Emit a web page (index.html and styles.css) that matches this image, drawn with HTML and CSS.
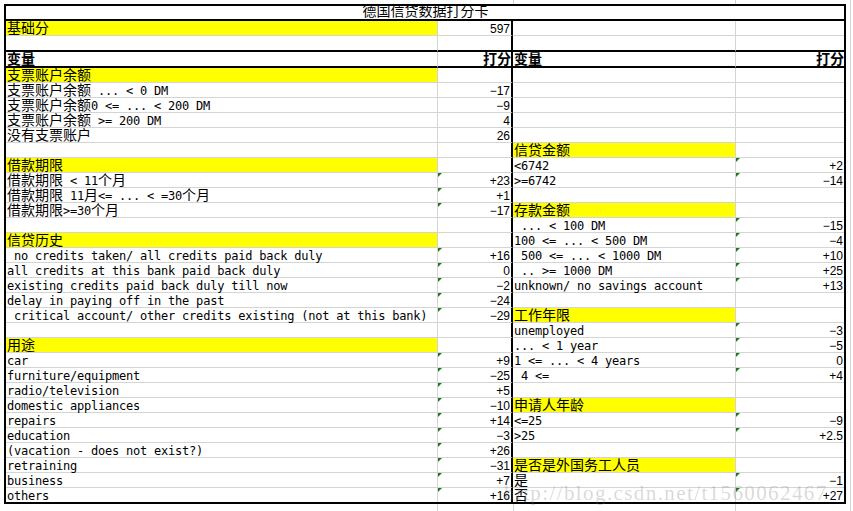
FILE: index.html
```html
<!DOCTYPE html>
<html lang="zh-CN">
<head>
<meta charset="utf-8">
<title>德国信贷数据打分卡</title>
<link rel="stylesheet" href="styles.css">
</head>
<body>
<div class="canvas">
  <div class="sheet">
    <div class="cell title"><span class="zh">德国信贷数据打分卡</span></div>

    <div class="cell col-a hl"><span class="zh">基础分</span></div><div class="cell col-b num">597</div><div class="cell col-c"></div><div class="cell col-d"></div>
    <div class="cell col-a thick"></div><div class="cell col-b thick"></div><div class="cell col-c thick"></div><div class="cell col-d thick"></div>
    <div class="cell col-a thick head"><span class="zh">变量</span></div><div class="cell col-b thick head right"><span class="zh">打分</span></div><div class="cell col-c thick head"><span class="zh">变量</span></div><div class="cell col-d thick head right"><span class="zh">打分</span></div>

    <div class="cell col-a hl"><span class="zh">支票账户余额</span></div><div class="cell col-b"></div><div class="cell col-c"></div><div class="cell col-d"></div>
    <div class="cell col-a"><span class="zh">支票账户余额</span> ... &lt; 0 DM</div><div class="cell col-b num">−17</div><div class="cell col-c"></div><div class="cell col-d"></div>
    <div class="cell col-a"><span class="zh">支票账户余额</span>0 &lt;= ... &lt; 200 DM</div><div class="cell col-b num">−9</div><div class="cell col-c"></div><div class="cell col-d"></div>
    <div class="cell col-a"><span class="zh">支票账户余额</span> &gt;= 200 DM</div><div class="cell col-b num">4</div><div class="cell col-c"></div><div class="cell col-d"></div>
    <div class="cell col-a"><span class="zh">没有支票账户</span></div><div class="cell col-b num">26</div><div class="cell col-c"></div><div class="cell col-d"></div>
    <div class="cell col-a"></div><div class="cell col-b"></div><div class="cell col-c hl"><span class="zh">信贷金额</span></div><div class="cell col-d"></div>
    <div class="cell col-a hl"><span class="zh">借款期限</span></div><div class="cell col-b"></div><div class="cell col-c">&lt;6742</div><div class="cell col-d num tri">+2</div>
    <div class="cell col-a"><span class="zh">借款期限</span> &lt; 11<span class="zh">个月</span></div><div class="cell col-b num tri">+23</div><div class="cell col-c">&gt;=6742</div><div class="cell col-d num tri">−14</div>
    <div class="cell col-a"><span class="zh">借款期限</span> 11<span class="zh">月</span>&lt;= ... &lt; =30<span class="zh">个月</span></div><div class="cell col-b num tri">+1</div><div class="cell col-c"></div><div class="cell col-d"></div>
    <div class="cell col-a"><span class="zh">借款期限</span>&gt;=30<span class="zh">个月</span></div><div class="cell col-b num tri">−17</div><div class="cell col-c hl"><span class="zh">存款金额</span></div><div class="cell col-d"></div>
    <div class="cell col-a"></div><div class="cell col-b"></div><div class="cell col-c"> ... &lt; 100 DM</div><div class="cell col-d num tri">−15</div>
    <div class="cell col-a hl"><span class="zh">信贷历史</span></div><div class="cell col-b"></div><div class="cell col-c">100 &lt;= ... &lt; 500 DM</div><div class="cell col-d num tri">−4</div>
    <div class="cell col-a"> no credits taken/ all credits paid back duly</div><div class="cell col-b num tri">+16</div><div class="cell col-c"> 500 &lt;= ... &lt; 1000 DM</div><div class="cell col-d num tri">+10</div>
    <div class="cell col-a">all credits at this bank paid back duly</div><div class="cell col-b num tri">0</div><div class="cell col-c"> .. &gt;= 1000 DM</div><div class="cell col-d num tri">+25</div>
    <div class="cell col-a">existing credits paid back duly till now</div><div class="cell col-b num tri">−2</div><div class="cell col-c">unknown/ no savings account</div><div class="cell col-d num tri">+13</div>
    <div class="cell col-a">delay in paying off in the past</div><div class="cell col-b num tri">−24</div><div class="cell col-c"></div><div class="cell col-d"></div>
    <div class="cell col-a"> critical account/ other credits existing (not at this bank)</div><div class="cell col-b num tri">−29</div><div class="cell col-c hl"><span class="zh">工作年限</span></div><div class="cell col-d"></div>
    <div class="cell col-a"></div><div class="cell col-b"></div><div class="cell col-c">unemployed</div><div class="cell col-d num tri">−3</div>
    <div class="cell col-a hl"><span class="zh">用途</span></div><div class="cell col-b"></div><div class="cell col-c">... &lt; 1 year</div><div class="cell col-d num tri">−5</div>
    <div class="cell col-a">car</div><div class="cell col-b num tri">+9</div><div class="cell col-c">1 &lt;= ... &lt; 4 years</div><div class="cell col-d num tri">0</div>
    <div class="cell col-a">furniture/equipment</div><div class="cell col-b num tri">−25</div><div class="cell col-c"> 4 &lt;=</div><div class="cell col-d num tri">+4</div>
    <div class="cell col-a">radio/television</div><div class="cell col-b num tri">+5</div><div class="cell col-c"></div><div class="cell col-d"></div>
    <div class="cell col-a">domestic appliances</div><div class="cell col-b num tri">−10</div><div class="cell col-c hl"><span class="zh">申请人年龄</span></div><div class="cell col-d"></div>
    <div class="cell col-a">repairs</div><div class="cell col-b num tri">+14</div><div class="cell col-c">&lt;=25</div><div class="cell col-d num tri">−9</div>
    <div class="cell col-a">education</div><div class="cell col-b num tri">−3</div><div class="cell col-c">&gt;25</div><div class="cell col-d num tri">+2.5</div>
    <div class="cell col-a">(vacation - does not exist?)</div><div class="cell col-b num tri">+26</div><div class="cell col-c"></div><div class="cell col-d"></div>
    <div class="cell col-a">retraining</div><div class="cell col-b num tri">−31</div><div class="cell col-c hl"><span class="zh">是否是外国务工人员</span></div><div class="cell col-d"></div>
    <div class="cell col-a">business</div><div class="cell col-b num tri">+7</div><div class="cell col-c"><span class="zh">是</span></div><div class="cell col-d num tri">−1</div>
    <div class="cell col-a last">others</div><div class="cell col-b num tri last">+16</div><div class="cell col-c last"><span class="zh">否</span></div><div class="cell col-d num tri last">+27</div>
  </div>
  <div class="watermark">http://blog.csdn.net/t1560062467</div>
</div>
</body>
</html>
```

FILE: styles.css
```css
* {
  box-sizing: border-box;
}

body {
  margin: 0;
  background: #ffffff;
}

.canvas {
  position: relative;
  width: 853px;
  height: 511px;
  overflow: hidden;
  padding: 4px 0 0 4px;
  background-color: #ffffff;
  background-image:
    linear-gradient(#d4d4d4, #d4d4d4),
    linear-gradient(#d4d4d4, #d4d4d4),
    linear-gradient(#d4d4d4, #d4d4d4),
    linear-gradient(#d4d4d4, #d4d4d4);
  background-repeat: no-repeat;
  background-size: 1px 100%, 1px 100%, 1px 8px, 1px 100%;
  background-position: 513px 0, 735px 0, 437px 100%, 850px 0;
}

.sheet {
  width: 842px;
  border: 2px solid #000000;
  background: #ffffff;
  display: grid;
  grid-template-columns: 432px 75px 223px 108px;
}

.cell {
  position: relative;
  height: 15px;
  border-bottom: 1px solid #d4d4d4;
  padding-left: 1px;
  padding-top: 2px;
  font-family: "DejaVu Sans Mono", "Liberation Mono", monospace;
  font-size: 12px;
  line-height: 13px;
  letter-spacing: -0.22px;
  white-space: pre;
  overflow: visible;
  color: #000000;
}

.zh {
  font-family: "Noto Sans CJK SC", "Noto Sans CJK JP", sans-serif;
  font-size: 14px;
  letter-spacing: 0;
  line-height: 9px;
}

.title {
  grid-column: 1 / -1;
  height: 15px;
  padding-top: 0;
  border-bottom: 2px solid #000000;
  text-align: center;
  line-height: 13px;
}

.col-a,
.col-c {
  border-right: 1px solid #d4d4d4;
}

.col-b {
  border-right: 2px solid #000000;
}

.num {
  text-align: right;
  padding-right: 1px;
  font-family: "Liberation Sans", Arial, sans-serif;
  font-size: 12px;
  letter-spacing: 0;
}

.thick {
  height: 16px;
  border-bottom: 2px solid #000000;
}

.head .zh {
  font-weight: 700;
}

.right {
  text-align: right;
  padding-right: 0;
}

.last {
  height: 14px;
  border-bottom: 0;
}

.hl {
  background: #ffff00;
}

.tri::before {
  content: "";
  position: absolute;
  left: 0;
  top: 0;
  border-top: 4px solid #1d7a1d;
  border-right: 4px solid transparent;
}

.watermark {
  position: absolute;
  left: 504px;
  top: 481px;
  font-family: "Liberation Serif", "DejaVu Serif", serif;
  font-size: 21px;
  line-height: 24px;
  letter-spacing: 1.4px;
  color: rgba(120, 120, 120, 0.28);
  white-space: nowrap;
  pointer-events: none;
}
```
